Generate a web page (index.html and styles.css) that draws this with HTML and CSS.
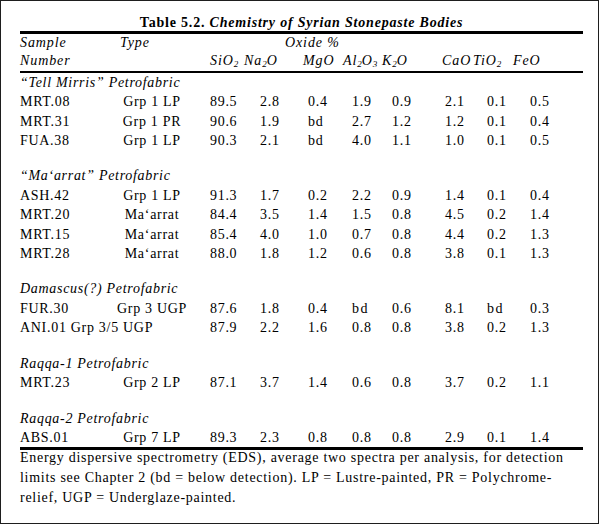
FILE: index.html
```html
<!DOCTYPE html>
<html lang="en">
<head>
<meta charset="utf-8">
<title>Table 5.2. Chemistry of Syrian Stonepaste Bodies</title>
<link rel="stylesheet" href="styles.css">
</head>
<body>
<div class="frame">
  <div class="title"><b>Table 5.2.</b> <b><i>Chemistry of Syrian Stonepaste Bodies</i></b></div>

  <div class="thead">
    <div class="hrow1"><span>Sample</span><span>Type</span><span>Oxide %</span></div>
    <div class="hrow2">
      <span>Number</span>
      <span>SiO<sub>2</sub></span>
      <span>Na<sub>2</sub>O</span>
      <span>MgO</span>
      <span>Al<sub>2</sub>O<sub>3</sub></span>
      <span>K<sub>2</sub>O</span>
      <span>CaO</span>
      <span>TiO<sub>2</sub></span>
      <span>FeO</span>
    </div>
  </div>

  <div class="tbody">
    <div class="group">“Tell Mirris” Petrofabric</div>
    <div class="row"><span>MRT.08</span><span class="type">Grp 1 LP</span><span>89.5</span><span>2.8</span><span>0.4</span><span>1.9</span><span>0.9</span><span>2.1</span><span>0.1</span><span>0.5</span></div>
    <div class="row"><span>MRT.31</span><span class="type">Grp 1 PR</span><span>90.6</span><span>1.9</span><span>bd</span><span>2.7</span><span>1.2</span><span>1.2</span><span>0.1</span><span>0.4</span></div>
    <div class="row"><span>FUA.38</span><span class="type">Grp 1 LP</span><span>90.3</span><span>2.1</span><span>bd</span><span>4.0</span><span>1.1</span><span>1.0</span><span>0.1</span><span>0.5</span></div>
    <div class="spacer"></div>

    <div class="group">“Ma‘arrat” Petrofabric</div>
    <div class="row"><span>ASH.42</span><span class="type">Grp 1 LP</span><span>91.3</span><span>1.7</span><span>0.2</span><span>2.2</span><span>0.9</span><span>1.4</span><span>0.1</span><span>0.4</span></div>
    <div class="row"><span>MRT.20</span><span class="type">Ma‘arrat</span><span>84.4</span><span>3.5</span><span>1.4</span><span>1.5</span><span>0.8</span><span>4.5</span><span>0.2</span><span>1.4</span></div>
    <div class="row"><span>MRT.15</span><span class="type">Ma‘arrat</span><span>85.4</span><span>4.0</span><span>1.0</span><span>0.7</span><span>0.8</span><span>4.4</span><span>0.2</span><span>1.3</span></div>
    <div class="row"><span>MRT.28</span><span class="type">Ma‘arrat</span><span>88.0</span><span>1.8</span><span>1.2</span><span>0.6</span><span>0.8</span><span>3.8</span><span>0.1</span><span>1.3</span></div>
    <div class="spacer"></div>

    <div class="group">Damascus(?) Petrofabric</div>
    <div class="row"><span>FUR.30</span><span class="type">Grp 3 UGP</span><span>87.6</span><span>1.8</span><span>0.4</span><span class="bd">bd</span><span>0.6</span><span>8.1</span><span class="bd">bd</span><span>0.3</span></div>
    <div class="row"><span class="span2">ANI.01 Grp 3/5 UGP</span><span>87.9</span><span>2.2</span><span>1.6</span><span>0.8</span><span>0.8</span><span>3.8</span><span>0.2</span><span>1.3</span></div>
    <div class="spacer"></div>

    <div class="group">Raqqa-1 Petrofabric</div>
    <div class="row"><span>MRT.23</span><span class="type">Grp 2 LP</span><span>87.1</span><span>3.7</span><span>1.4</span><span>0.6</span><span>0.8</span><span>3.7</span><span>0.2</span><span>1.1</span></div>
    <div class="spacer"></div>

    <div class="group">Raqqa-2 Petrofabric</div>
    <div class="row last"><span>ABS.01</span><span class="type">Grp 7 LP</span><span>89.3</span><span>2.3</span><span>0.8</span><span>0.8</span><span>0.8</span><span>2.9</span><span>0.1</span><span>1.4</span></div>
  </div>

  <p class="notes">Energy dispersive spectrometry (EDS), average two spectra per analysis, for detection<br>limits see Chapter 2 (bd = below detection). LP = Lustre-painted, PR = Polychrome-<br>relief, UGP = Underglaze-painted.</p>
</div>
</body>
</html>
```

FILE: styles.css
```css
html, body {
  margin: 0;
  padding: 0;
  background: #ffffff;
}

body {
  font-family: "Liberation Serif", "Times New Roman", serif;
  font-size: 14px;
  color: #000000;
}

.frame {
  box-sizing: border-box;
  width: 599px;
  height: 524px;
  border: 1px solid #1e1e1e;
  padding: 0 15px 0 19px;
  background: #ffffff;
}

.title {
  padding-top: 13px;
  line-height: 17px;
  text-align: center;
  font-size: 14px;
  letter-spacing: 0.8px;
  border-bottom: 3px solid #000;
}

.thead {
  font-style: italic;
  letter-spacing: 0.9px;
  border-bottom: 2px solid #000;
}

.hrow1,
.hrow2 {
  display: grid;
  line-height: 18.4px;
}

.hrow1 {
  grid-template-columns: 100px 165px 1fr;
}

.hrow2 {
  grid-template-columns: 190px 34px 59px 40px 39px 60px 31px 40px 1fr;
}

sub {
  font-size: 9px;
  vertical-align: -2px;
  line-height: 0;
  letter-spacing: 0;
}

.tbody {
  letter-spacing: 0.7px;
}

.group {
  font-style: italic;
  line-height: 19.4px;
}

.row {
  display: grid;
  grid-template-columns: 80px 110px 50px 48px 44px 40px 53px 42px 43px 1fr;
  line-height: 19.4px;
}

.row .type {
  text-align: center;
  padding-right: 6px;
}

.row .span2 {
  grid-column: span 2;
}

.row .bd {
  letter-spacing: 1.6px;
}

.row.last {
  border-bottom: 3px solid #000;
}

.spacer {
  height: 16px;
}

.notes {
  margin: -2px 0 0 0;
  line-height: 20px;
  letter-spacing: 0.72px;
}
```
